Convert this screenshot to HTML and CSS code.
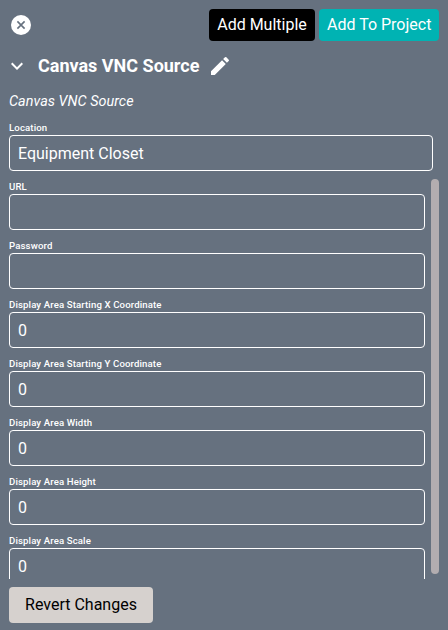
FILE: index.html
```html
<!DOCTYPE html>
<html lang="en">
<head>
<meta charset="utf-8">
<title>Canvas VNC Source</title>
<link rel="stylesheet" href="styles.css">
</head>
<body>
<main class="panel">
  <header class="toolbar">
    <svg class="icon close" viewBox="0 0 24 24"><circle cx="12" cy="12" r="10" fill="#fff"/><path d="M8.4 8.4l7.2 7.2M15.6 8.4l-7.2 7.2" fill="none" stroke="#66717f" stroke-width="1.6"/></svg>
    <div class="actions">
      <button class="btn dark">Add Multiple</button>
      <button class="btn teal">Add To Project</button>
    </div>
  </header>
  <div class="title-row">
    <svg class="icon" viewBox="0 0 24 24"><path fill="#fff" d="M16.59 8.59 12 13.17 7.41 8.59 6 10l6 6 6-6z"/></svg>
    <h1 class="title">Canvas VNC Source</h1>
    <svg class="icon" viewBox="0 0 24 24"><path fill="#fff" d="M3 17.25V21h3.75L17.81 9.94l-3.75-3.75L3 17.25zM20.71 7.04a1 1 0 0 0 0-1.41l-2.34-2.34a1 1 0 0 0-1.41 0l-1.83 1.83 3.75 3.75 1.83-1.83z"/></svg>
  </div>
  <p class="subtitle">Canvas VNC Source</p>
  <div class="field location"><div class="label">Location</div><div class="input">Equipment Closet</div></div>
  <section class="scroll">
    <div class="fields">
      <div class="field"><div class="label">URL</div><div class="input"></div></div>
      <div class="field"><div class="label">Password</div><div class="input"></div></div>
      <div class="field"><div class="label">Display Area Starting X Coordinate</div><div class="input">0</div></div>
      <div class="field"><div class="label">Display Area Starting Y Coordinate</div><div class="input">0</div></div>
      <div class="field"><div class="label">Display Area Width</div><div class="input">0</div></div>
      <div class="field"><div class="label">Display Area Height</div><div class="input">0</div></div>
      <div class="field"><div class="label">Display Area Scale</div><div class="input">0</div></div>
    </div>
    <div class="thumb"></div>
  </section>
  <button class="btn revert">Revert Changes</button>
</main>
</body>
</html>
```
FILE: styles.css
```css
* { box-sizing: border-box; }
body {
  margin: 0;
  background: #66717f;
  color: #fff;
  font-family: Roboto, sans-serif;
  font-size: 16px;
}
.panel {
  height: 630px;
  padding: 9px 9px 7px;
  display: flex;
  flex-direction: column;
  overflow: hidden;
}
.toolbar {
  height: 32px;
  display: flex;
  align-items: center;
  justify-content: space-between;
}
.icon { width: 24px; height: 24px; flex: none; display: block; }
.actions { display: flex; gap: 4px; }
.btn {
  height: 32px;
  border: 0;
  border-radius: 4px;
  padding: 0 8px;
  font: 16px/32px Roboto, sans-serif;
  color: #fff;
  white-space: nowrap;
}
.dark { background: #000; width: 106px; }
.teal { background: #00b3b3; width: 120px; }
.title-row {
  height: 24px;
  margin: 13px 0 0 -4px;
  display: flex;
  align-items: center;
}
.title {
  margin: 0 9px 0 9px;
  font-size: 18px;
  line-height: 24px;
  font-weight: 700;
}
.subtitle {
  margin: 14px 0 0;
  font-size: 14.4px;
  line-height: 20px;
  font-style: italic;
  letter-spacing: 0.03px;
}
.field { height: 51px; flex: none; }
.location { margin: 8px 6px 8px 0; }
.label {
  height: 15px;
  font-size: 9.6px;
  line-height: 15px;
  font-weight: 500;
  letter-spacing: 0.13px;
}
.input {
  height: 36px;
  border: 1px solid #fff;
  border-radius: 4px;
  padding: 0 8px;
  line-height: 35px;
}
.scroll {
  height: 400px;
  flex: none;
  display: flex;
  gap: 6px;
  overflow: hidden;
}
.fields {
  width: 416px;
  display: flex;
  flex-direction: column;
  gap: 8px;
}
.thumb {
  width: 8px;
  height: 395px;
  border-radius: 4px;
  background: #b3adb0;
}
.revert {
  width: 144px;
  height: 36px;
  line-height: 36px;
  margin-top: 8px;
  flex: none;
  background: #d6d1ce;
  color: #000;
}
```
